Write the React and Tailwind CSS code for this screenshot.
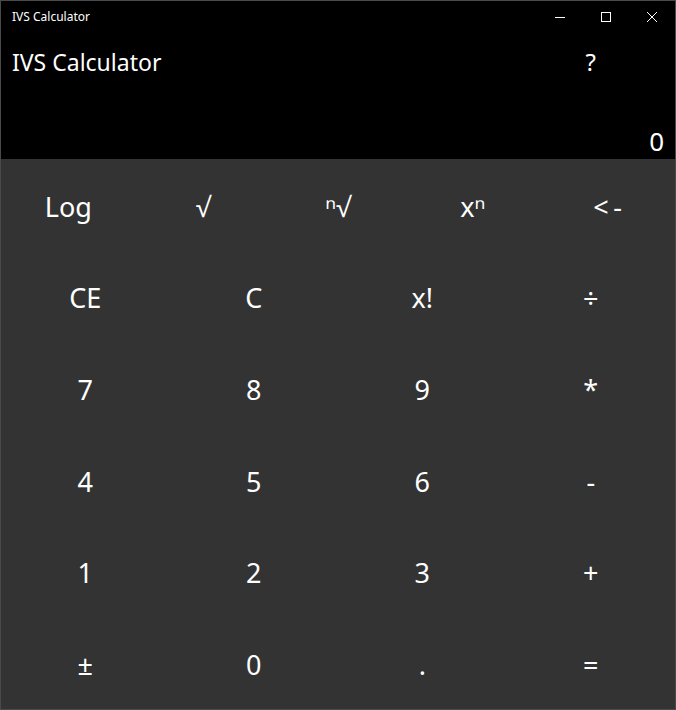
import React, { useState } from "react";

const topRow = ["Log", "√", "ⁿ√", "xⁿ", "<\u2009-"];
const rows = [
  ["CE", "C", "x!", "÷"],
  ["7", "8", "9", "*"],
  ["4", "5", "6", "-"],
  ["1", "2", "3", "+"],
  ["±", "0", ".", "="],
];

const font = { fontFamily: '"Noto Sans", "Open Sans", sans-serif' };

const App = () => {
  const [display] = useState("0");

  return (
    <div
      className="w-[676px] h-[710px] bg-black border border-[#4a4a4a] flex flex-col text-white select-none"
      style={font}
    >
      {/* title bar */}
      <div className="h-[31px] flex items-center justify-between">
        <span className="pl-[11px] text-[12px] leading-none">IVS Calculator</span>
        <div className="flex h-full">
          <div className="w-[46px] h-full flex items-center justify-center">
            <svg width="10" height="10" viewBox="0 0 10 10">
              <path d="M0 5.5h10" stroke="white" strokeWidth="1" />
            </svg>
          </div>
          <div className="w-[46px] h-full flex items-center justify-center">
            <svg width="10" height="10" viewBox="0 0 10 10">
              <rect x="0.5" y="0.5" width="9" height="9" fill="none" stroke="white" strokeWidth="1" />
            </svg>
          </div>
          <div className="w-[46px] h-full flex items-center justify-center">
            <svg width="10" height="10" viewBox="0 0 10 10">
              <path d="M0 0L10 10M10 0L0 10" stroke="white" strokeWidth="1" />
            </svg>
          </div>
        </div>
      </div>

      {/* header */}
      <div className="h-[127px] flex flex-col">
        <div className="h-[60px] grid grid-cols-4 items-center">
          <div className="col-span-3 pl-[11px] text-[23px]">IVS Calculator</div>
          <div className="text-center text-[24px]">?</div>
        </div>
        <div className="mt-auto h-[36px] leading-[36px] text-right pr-[11px] text-[26px]">
          {display}
        </div>
      </div>

      {/* keypad */}
      <div className="flex-1 bg-[#333333] flex flex-col">
        <div className="flex-1 grid grid-cols-5">
          {topRow.map((k) => (
            <button key={k} className="flex items-center justify-center pt-[4px] text-[27px] text-white">
              {k}
            </button>
          ))}
        </div>
        {rows.map((row, i) => (
          <div key={i} className="flex-1 grid grid-cols-4">
            {row.map((k) => (
              <button key={k} className="flex items-center justify-center pt-[4px] text-[27px] text-white">
                {k}
              </button>
            ))}
          </div>
        ))}
      </div>
    </div>
  );
};

export default App;
